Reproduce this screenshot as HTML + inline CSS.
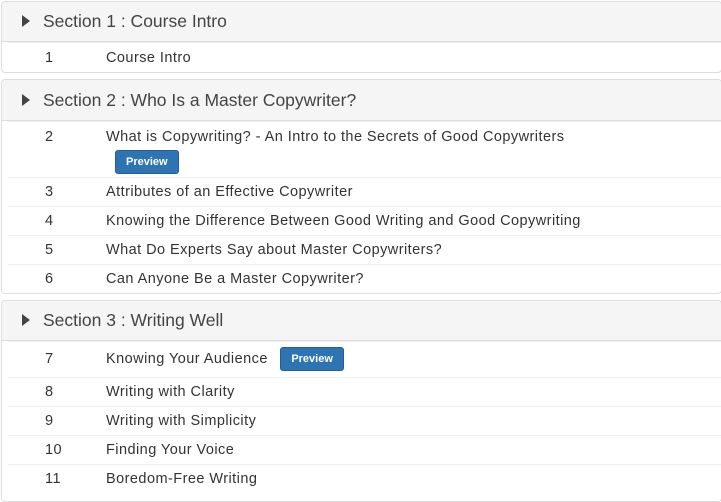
<!DOCTYPE html>
<html><head><style>
body{margin:0;width:721px;height:494px;overflow:hidden;background:#fff;font-family:"Liberation Sans",sans-serif;color:#333;}
.p{position:absolute;left:1px;width:719px;border:1px solid #ddd;border-radius:4px;overflow:hidden;background:#fff;}
.h{height:39px;background:#f5f5f5;border-bottom:1px solid #ddd;position:relative;font-size:17.5px;color:#444;line-height:39px;}
.h span{position:absolute;left:41px;top:0}
.h i{position:absolute;left:20px;top:13px;width:0;height:0;border-left:8px solid #444;border-top:6px solid transparent;border-bottom:6px solid transparent;}
.r{position:relative;height:28px;border-top:1px solid #eee;margin-left:6px;font-size:14.5px;line-height:28px;letter-spacing:0.45px}
.r:first-of-type{border-top:none}
.n{position:absolute;left:37px;top:0}
.t{position:absolute;left:98px;top:0;white-space:nowrap}
.b{display:inline-block;background:#2e73b2;border:1px solid #245e95;color:#fff;font-weight:bold;font-size:11px;border-radius:3px;padding:0 10px;line-height:22px;height:22px;vertical-align:middle;letter-spacing:0}
</style></head><body>
<div class="p" style="top:1px;height:70px">
<div class="h"><i></i><span>Section 1 : Course Intro</span></div>
<div class="r" style="height:31px;line-height:31px"><span class="n">1</span><span class="t">Course Intro</span></div>
</div>
<div class="p" style="top:79px;height:213px">
<div class="h" style="height:40px;line-height:40px"><i style="top:14px"></i><span>Section 2 : Who Is a Master Copywriter?</span></div>
<div class="r" style="height:55px"><span class="n" style="top:1px">2</span><span class="t" style="top:1px">What is Copywriting? - An Intro to the Secrets of Good Copywriters</span><span class="b" style="position:absolute;left:107px;top:28px">Preview</span></div>
<div class="r"><span class="n">3</span><span class="t">Attributes of an Effective Copywriter</span></div>
<div class="r"><span class="n">4</span><span class="t">Knowing the Difference Between Good Writing and Good Copywriting</span></div>
<div class="r"><span class="n">5</span><span class="t">What Do Experts Say about Master Copywriters?</span></div>
<div class="r"><span class="n">6</span><span class="t">Can Anyone Be a Master Copywriter?</span></div>
</div>
<div class="p" style="top:300px;height:200px">
<div class="h"><i></i><span>Section 3 : Writing Well</span></div>
<div class="r" style="height:35px;line-height:35px"><span class="n">7</span><span class="t">Knowing Your Audience <span class="b" style="margin-left:8px">Preview</span></span></div>
<div class="r"><span class="n">8</span><span class="t">Writing with Clarity</span></div>
<div class="r"><span class="n">9</span><span class="t">Writing with Simplicity</span></div>
<div class="r"><span class="n">10</span><span class="t">Finding Your Voice</span></div>
<div class="r"><span class="n">11</span><span class="t">Boredom-Free Writing</span></div>
</div>
</body></html>
